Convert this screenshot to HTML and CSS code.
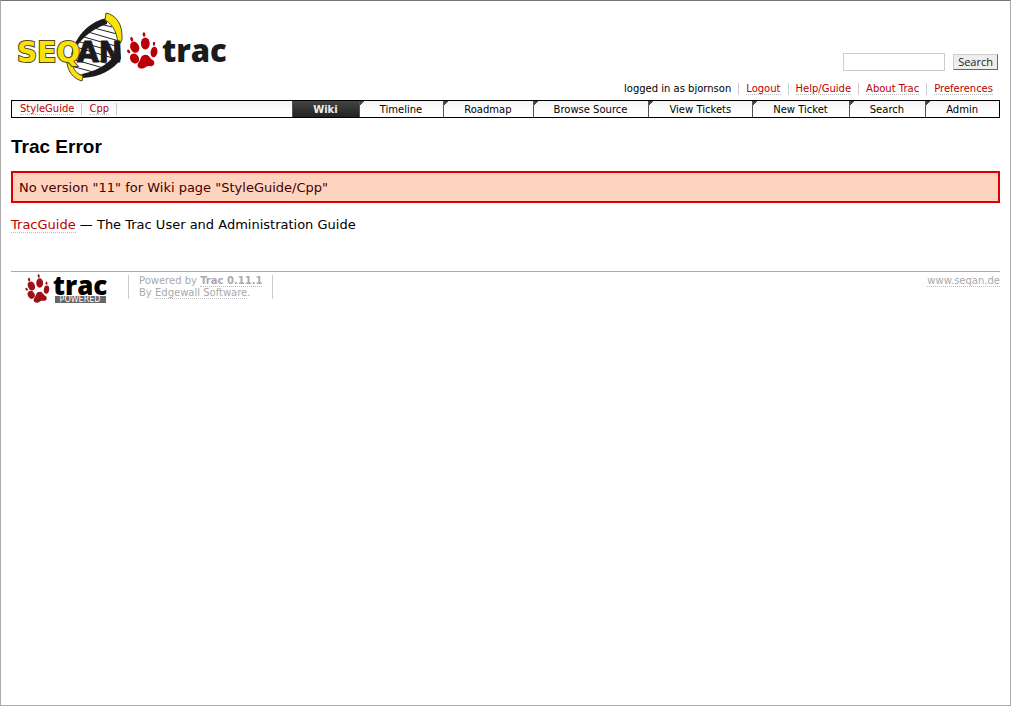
FILE: index.html
```html
<!DOCTYPE html>
<html lang="en">
<head>
<meta charset="utf-8">
<title>Trac Error</title>
<link rel="stylesheet" href="styles.css">
</head>
<body>
<svg class="defs" aria-hidden="true">
  <symbol id="paw" viewBox="0 0 31 37">
    <ellipse cx="17" cy="2.500" rx="1.400" ry="2.300" transform="rotate(-8 17 2.500)"/>
    <ellipse cx="4.700" cy="7.200" rx="1.400" ry="2.300" transform="rotate(-15 4.700 7.200)"/>
    <ellipse cx="27" cy="11.700" rx="1.200" ry="2"/>
    <ellipse cx="1.600" cy="19.400" rx="1.300" ry="2" transform="rotate(-30 1.600 19.400)"/>
    <ellipse cx="18.300" cy="11.500" rx="4.400" ry="6"/>
    <ellipse cx="7.700" cy="15.200" rx="4.400" ry="5.800" transform="rotate(-22 7.700 15.200)"/>
    <ellipse cx="27" cy="20" rx="3.400" ry="5.300" transform="rotate(8 27 20)"/>
    <ellipse cx="7.500" cy="26.500" rx="4.300" ry="5.300" transform="rotate(-30 7.500 26.500)"/>
    <path d="M14 25.500c1.500-3.600 6.800-3.800 8.500-.5.900 1.800 2 2.200 3.300 3 2.300 1.500 2 5.200-.6 6-2 .6-4-.6-6 .7-1.700 1.200-3.300 2.300-5.600 1.800-3-.6-3.900-3.700-2-6 1.300-1.500 1.600-3.200 2.400-5z"/>
  </symbol>
</svg>

<header class="banner">
  <a class="logo" href="#" aria-label="SeqAn Trac">
    <svg width="214" height="72" viewBox="16 10 214 72">
      <path d="M106 20C92 24 79 36 74 52L72 76C88 77 101 72 116 58L120 39C118 29 113 23 106 20z" fill="#fff"/>
      <path d="M94 27l23 6M88 31l31 9M84 36l35 10M80 41l39 11M76 46l40 12M73 52l39 12M72 58l35 10M71 65l26 7M70 71l15 4M100 23l12 3" stroke="#222" stroke-width="1" fill="none"/>
      <path d="M107 17C91 20 76 33 71 54l2-1C78 40 91 28 107 23z" fill="#1b1b1b"/>
      <path d="M120 43C114 60 101 69 82 73l1 4C100 76 113 69 121 58z" fill="#1b1b1b"/>
      <path d="M106 12C116 14 123 23 122 39L118 46C118 34 114 24 105 19z" fill="#fbe20b" stroke="#4c4920"/>
      <path d="M67 62C68 71 74 78 82 80L83 75C77 73 73 69 72 61z" fill="#fbe20b" stroke="#4c4920"/>
      <text class="logo-seqan logo-seq" x="17" y="61">SEQ</text>
      <text class="logo-seqan logo-an" x="77" y="61">AN</text>
      <use href="#paw" x="127" y="31" width="31" height="37" fill="#b90009"/>
      <text class="logo-trac" x="162" y="61">trac</text>
    </svg>
  </a>
  <form class="search">
    <input class="search-box" type="text" aria-label="Search">
    <button class="search-button" type="submit">Search</button>
  </form>
</header>

<nav class="metanav">
  <ul class="links">
    <li>logged in as bjornson</li>
    <li><a href="#">Logout</a></li>
    <li><a href="#">Help/Guide</a></li>
    <li><a href="#">About Trac</a></li>
    <li><a href="#">Preferences</a></li>
  </ul>
</nav>

<div class="navbar">
  <ul class="links trail">
    <li><a href="#">StyleGuide</a></li>
    <li><a href="#">Cpp</a></li>
  </ul>
  <nav class="tabs">
    <a class="tab active" href="#">Wiki</a>
    <a class="tab" href="#">Timeline</a>
    <a class="tab" href="#">Roadmap</a>
    <a class="tab" href="#">Browse Source</a>
    <a class="tab" href="#">View Tickets</a>
    <a class="tab" href="#">New Ticket</a>
    <a class="tab" href="#">Search</a>
    <a class="tab" href="#">Admin</a>
  </nav>
</div>

<main>
  <h1 class="title">Trac Error</h1>
  <p class="message">No version "11" for Wiki page "StyleGuide/Cpp"</p>
  <p class="help"><a href="#">TracGuide</a> — The Trac User and Administration Guide</p>
</main>

<footer class="footer">
  <a class="powered-logo" href="#" aria-label="Trac Powered">
    <svg width="86" height="32" viewBox="24 273 86 32">
      <use href="#paw" x="25" y="274" width="25" height="29" fill="#9c1216"/>
      <text class="powered-trac" x="53" y="295">trac</text>
      <rect x="55" y="296" width="51" height="7" fill="#666"/>
      <text class="powered-text" x="80" y="302">POWERED</text>
    </svg>
  </a>
  <p class="powered">Powered by <a href="#"><strong>Trac 0.11.1</strong></a><br>By <a href="#">Edgewall Software</a>.</p>
  <p class="site"><a href="#">www.seqan.de</a></p>
</footer>
</body>
</html>
```

FILE: styles.css
```css
* { box-sizing: border-box; }

body {
  min-height: 100vh;
  margin: 0;
  padding: 10px;
  border: 1px solid #aaa;
  border-top-color: #777;
  background: #fff;
  color: #000;
  font: 13px/16px Verdana, "DejaVu Sans", sans-serif;
}

a {
  color: #b00;
  text-decoration: none;
  border-bottom: 1px dotted #bbb;
}

.defs { position: absolute; width: 0; height: 0; }

.banner {
  display: flex;
  justify-content: space-between;
  align-items: flex-end;
}
.logo { margin-left: 5px; border: 0; }
.logo svg, .powered-logo svg { display: block; overflow: visible; }
.logo-seqan { font: bold 28px "DejaVu Sans", sans-serif; }
.logo-seq { fill: #fbe20b; stroke: #4c4920; stroke-width: 2px; paint-order: stroke; }
.logo-an { fill: #1b1b1b; stroke: #1b1b1b; stroke-width: 1px; }
.logo-trac, .powered-trac { font-family: "Open Sans", sans-serif; font-weight: 800; }
.logo-trac { font-size: 31px; fill: #1b1b1b; }

.search { display: flex; gap: 8px; margin: 0 2px 12px 0; }
.search-box {
  width: 102px;
  height: 18px;
  padding: 0 4px;
  border: 1px solid #ccc;
  font-size: 11px;
}
.search-button {
  height: 16px;
  margin-top: 1px;
  padding: 0 4px;
  border: 1px solid #ccc;
  border-right-color: #666;
  border-bottom-color: #666;
  background: #eee;
  color: #222;
  font: 11px/14px "Open Sans", sans-serif;
}

.links {
  display: flex;
  margin: 0;
  padding: 0;
  list-style: none;
  font-size: 10px;
  line-height: 12px;
}
.links li { padding: 0 7px; border-right: 1px solid #ccc; }

.metanav { display: flex; justify-content: flex-end; padding-bottom: 5px; }
.metanav li:last-child { border-right: 0; }

.navbar {
  display: flex;
  justify-content: space-between;
  height: 18px;
  border: 1px solid #000;
  background: linear-gradient(#f3f3f3, #fff 60%);
  font-size: 10px;
}
.trail { padding-top: 2px; }
.trail li { height: 12px; padding: 0 7px 0 8px; }
.trail li + li { padding: 0 7px; }

.tabs { display: flex; }
.tab {
  padding: 0 21px 0 20px;
  border: 0;
  border-left: 1px solid #555;
  background: linear-gradient(135deg, #444 3px, transparent 3px);
  color: #000;
  line-height: 17px;
}
.tab.active {
  background: linear-gradient(#444, #222);
  color: #eee;
  font-weight: bold;
}

.title {
  margin: 18px 0 13px;
  font: bold 19px/22px Arial, "Liberation Sans", sans-serif;
}
.message {
  margin: 0;
  padding: 7px 6px 5px;
  border: 2px solid #d00;
  background: #ffd4be;
  color: #400;
}
.help { margin: 14px 0 38px; }

.footer {
  display: flex;
  align-items: flex-start;
  border-top: 1px solid #aaa;
  color: #aaa;
  font-size: 10px;
  line-height: 12px;
}
.footer a { color: #aaa; }
.footer p { margin: 0; }
.footer .powered-logo { margin: 1px 18px 0 13px; border: 0; }
.footer .powered {
  margin-top: 3px;
  padding: 0 10px;
  border-left: 1px solid #ccc;
  border-right: 1px solid #ccc;
}
.footer .site { margin: 3px 0 0 auto; }
.powered-trac { font-size: 26px; fill: #000; }
.powered-text {
  fill: #fff;
  font: 8px "DejaVu Sans", sans-serif;
  text-anchor: middle;
}
```
